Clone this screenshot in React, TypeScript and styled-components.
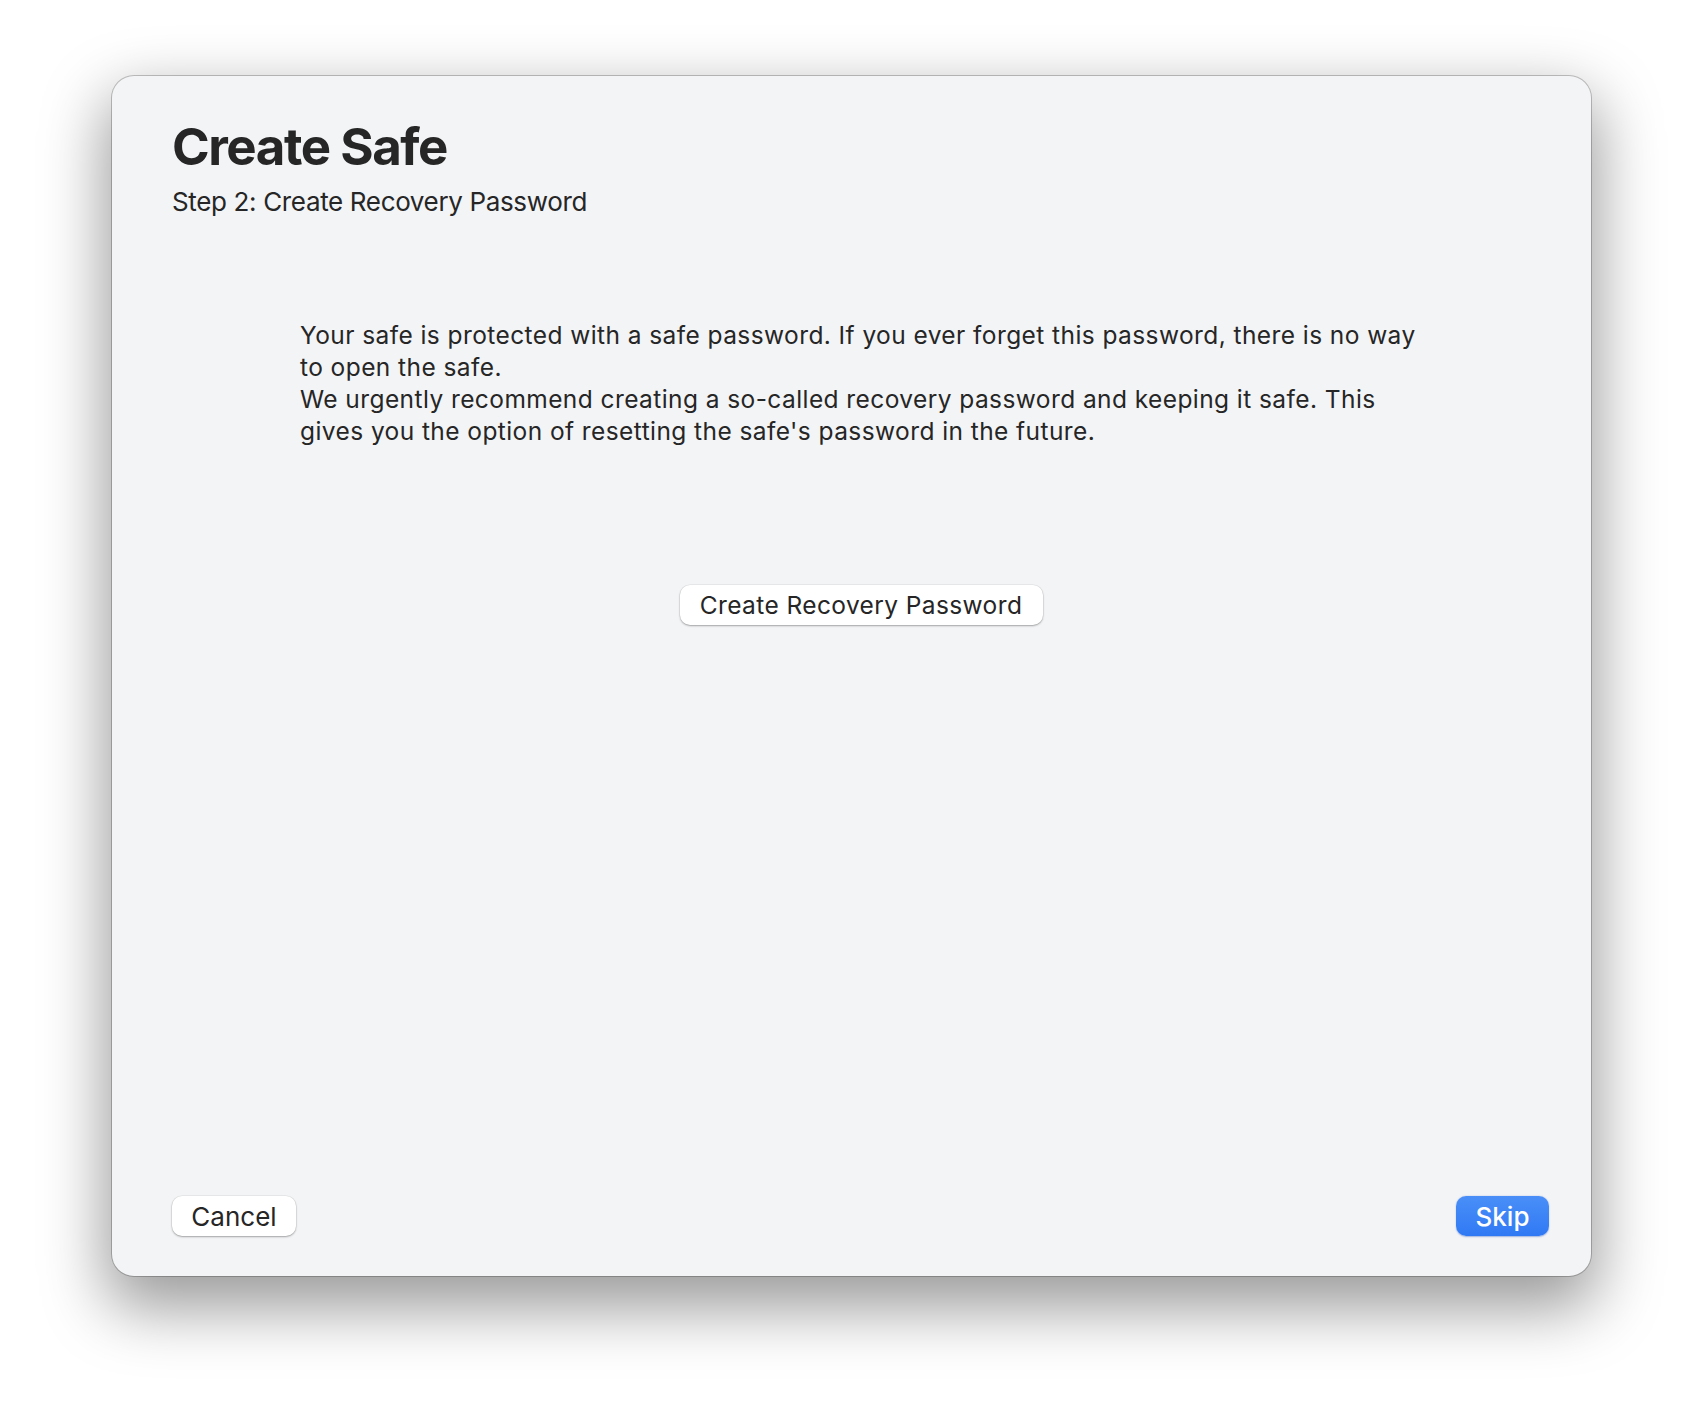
import React from "react";
import styled, { createGlobalStyle } from "styled-components";

const GlobalStyle = createGlobalStyle`
  html, body {
    margin: 0;
    padding: 0;
    background: #ffffff;
  }
  body {
    font-family: Inter, "Noto Sans", "Liberation Sans", sans-serif;
    -webkit-font-smoothing: antialiased;
  }
`;

const Page = styled.div`
  width: 1702px;
  height: 1424px;
  padding: 76px 0 0 112px;
  box-sizing: border-box;
  background: #ffffff;
`;

const Window = styled.div`
  width: 1479px;
  height: 1200px;
  box-sizing: border-box;
  background: #f3f4f6;
  border-radius: 22px;
  box-shadow: 0 0 0 1px rgba(0, 0, 0, 0.22), 0 26px 64px 6px rgba(0, 0, 0, 0.4);
  display: flex;
  flex-direction: column;
  color: #262626;
`;

const Header = styled.header`
  display: flex;
  flex-direction: column;
  gap: 9px;
  padding: 41px 60px 0 60px;
`;

const Title = styled.h1`
  margin: 0;
  font-size: 51px;
  line-height: 60px;
  font-weight: 700;
  letter-spacing: -1.45px;
`;

const Subtitle = styled.div`
  font-size: 26px;
  line-height: 32px;
  font-weight: 400;
  letter-spacing: -0.35px;
`;

const Content = styled.main`
  flex: 1;
  display: flex;
  flex-direction: column;
  align-items: center;
  padding: 101px 0 0 188px;
  width: 1122px;
  box-sizing: content-box;
`;

const Body = styled.p`
  margin: 0;
  width: 100%;
  font-size: 24.5px;
  line-height: 32px;
  letter-spacing: 0.42px;
`;

const Footer = styled.footer`
  display: flex;
  justify-content: space-between;
  align-items: center;
  padding: 0 42px 40px 60px;
`;

const Button = styled.button<{ $primary?: boolean; $w: number }>`
  width: ${(p) => p.$w}px;
  height: 40px;
  border: none;
  border-radius: 10px;
  font-family: Inter, "Noto Sans", "Liberation Sans", sans-serif;
  font-size: 24.5px;
  letter-spacing: 0.4px;
  font-weight: ${(p) => (p.$primary ? 500 : 400)};
  color: ${(p) => (p.$primary ? "#ffffff" : "#262626")};
  background: ${(p) =>
    p.$primary ? "linear-gradient(#4a8ff8, #2f79f4)" : "#ffffff"};
  box-shadow: ${(p) =>
    p.$primary
      ? "0 0.5px 1.5px rgba(0, 60, 180, 0.35)"
      : "0 0 0 0.5px rgba(0, 0, 0, 0.08), 0 1px 2px rgba(0, 0, 0, 0.3)"};
  padding: 0;
  cursor: pointer;
`;

const CenterButton = styled(Button)`
  margin-top: 138px;
`;

const FooterButton = styled(Button)`
  font-size: 26px;
  letter-spacing: 0;
`;

export default function App() {
  return (
    <>
      <GlobalStyle />
      <Page>
        <Window>
          <Header>
            <Title>Create Safe</Title>
            <Subtitle>Step 2: Create Recovery Password</Subtitle>
          </Header>
          <Content>
            <Body>
              Your safe is protected with a safe password. If you ever forget this password, there is no way to open the safe.
              <br />
              We urgently recommend creating a so-called recovery password and keeping it safe. This gives you the option of resetting the safe's password in the future.
            </Body>
            <CenterButton $w={363}>Create Recovery Password</CenterButton>
          </Content>
          <Footer>
            <FooterButton $w={124}>Cancel</FooterButton>
            <FooterButton $w={93} $primary>
              Skip
            </FooterButton>
          </Footer>
        </Window>
      </Page>
    </>
  );
}
